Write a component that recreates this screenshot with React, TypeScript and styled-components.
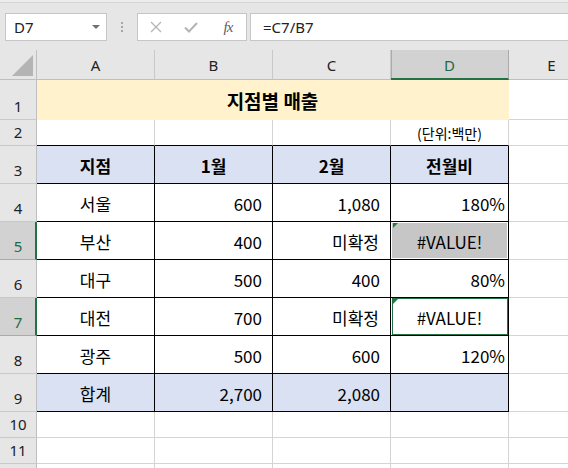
import React from "react";
import styled, { createGlobalStyle, css } from "styled-components";

const Global = createGlobalStyle`
  html, body { margin: 0; padding: 0; background: #fff; }
  body { width: 568px; height: 468px; overflow: hidden; font-family: "Noto Sans CJK KR", "Noto Sans", sans-serif; }
  * { box-sizing: border-box; }
`;

const GREEN = "#217346";
const GRID = "#d4d4d4";

const Page = styled.div`
  width: 568px;
  height: 468px;
  overflow: hidden;
  display: flex;
  flex-direction: column;
  background: #fff;
`;

const Toolbar = styled.div`
  height: 50px;
  flex: none;
  background: #e6e6e6;
  border-top: 2px solid #ececec;
  box-shadow: inset 0 1px 0 #d6d6d6;
  display: flex;
  align-items: flex-start;
  padding: 11px 0 0 5px;
`;

const NameBox = styled.div`
  width: 102px;
  height: 28px;
  background: #fff;
  border: 1px solid #c6c6c6;
  display: flex;
  align-items: center;
  justify-content: space-between;
  padding: 0 6px 0 8px;
  font-family: "Noto Sans", sans-serif;
  font-size: 15px;
  color: #222;
`;

const Caret = styled.span`
  width: 0;
  height: 0;
  border-left: 4px solid transparent;
  border-right: 4px solid transparent;
  border-top: 4px solid #707070;
`;

const Dots = styled.div`
  width: 30px;
  height: 28px;
  display: flex;
  flex-direction: column;
  align-items: center;
  justify-content: center;
  gap: 2px;
  & > span { width: 2px; height: 2px; background: #a6a6a6; }
`;

const FxBox = styled.div`
  width: 110px;
  height: 28px;
  background: #fff;
  border: 1px solid #c6c6c6;
  display: flex;
  align-items: center;
  padding-left: 12px;
`;

const FxBtn = styled.span<{ $w: number }>`
  width: ${(p) => p.$w}px;
  display: flex;
  align-items: center;
  justify-content: center;
`;

const FxLabel = styled.span`
  font-family: "Liberation Serif", serif;
  font-style: italic;
  font-size: 15px;
  color: #5e5e5e;
  letter-spacing: -1px;
`;

const FormulaInput = styled.div`
  flex: 1;
  margin-left: 3px;
  height: 28px;
  background: #fff;
  border: 1px solid #c6c6c6;
  border-right: none;
  display: flex;
  align-items: center;
  padding-left: 12px;
  font-family: "Noto Sans", sans-serif;
  font-size: 15px;
  color: #222;
`;

const Sheet = styled.div`
  display: grid;
  grid-template-columns: 37px repeat(4, 118px) 86px;
  grid-template-rows: 30px 40px 26px repeat(7, 38px) 26px 26px 26px;
  width: 604px;
`;

const Corner = styled.div`
  background: #e6e6e6;
  border-right: 1px solid #bfbfbf;
  border-bottom: 1px solid #bfbfbf;
  position: relative;
  &::after {
    content: "";
    position: absolute;
    right: 3px;
    bottom: 3px;
    width: 0;
    height: 0;
    border-left: 21px solid transparent;
    border-bottom: 21px solid #b4b4b4;
  }
`;

const ColHead = styled.div<{ $sel?: boolean }>`
  background: ${(p) => (p.$sel ? "#d2d2d2" : "#e6e6e6")};
  border-right: 1px solid ${(p) => (p.$sel ? "#ababab" : "#c9c9c9")};
  border-bottom: ${(p) => (p.$sel ? `2px solid ${GREEN}` : "1px solid #bfbfbf")};
  ${(p) => p.$sel && css`box-shadow: inset 1px 0 0 #ababab;`}
  display: flex;
  align-items: center;
  justify-content: center;
  padding-top: ${(p) => (p.$sel ? 1 : 0)}px;
  font-family: "Noto Sans", sans-serif;
  font-size: 15px;
  color: ${(p) => (p.$sel ? "#1d6b43" : "#222")};
`;

const RowHead = styled.div<{ $sel?: boolean }>`
  background: ${(p) => (p.$sel ? "#d2d2d2" : "#e6e6e6")};
  border-right: ${(p) => (p.$sel ? `2px solid ${GREEN}` : "1px solid #bfbfbf")};
  border-bottom: 1px solid ${(p) => (p.$sel ? "#ababab" : "#c9c9c9")};
  display: flex;
  align-items: flex-end;
  justify-content: center;
  padding-bottom: 2px;
  padding-left: ${(p) => (p.$sel ? 1 : 0)}px;
  font-family: "Noto Sans", sans-serif;
  font-size: 15px;
  line-height: 22px;
  color: ${(p) => (p.$sel ? "#1d6b43" : "#222")};
`;

type Align = "left" | "center" | "right";

const Cell = styled.div<{
  $bg?: string;
  $rb?: string;
  $bb?: string;
  $align?: Align;
  $pad?: number;
  $bold?: boolean;
  $size?: number;
  $span?: number;
  $selFill?: boolean;
  $active?: boolean;
  $flag?: boolean;
}>`
  position: relative;
  background: ${(p) => p.$bg || "#fff"};
  border-right: 1px solid ${(p) => p.$rb || GRID};
  border-bottom: 1px solid ${(p) => p.$bb || GRID};
  ${(p) => p.$span && css`grid-column: span ${p.$span};`}
  display: flex;
  align-items: center;
  justify-content: ${(p) =>
    p.$align === "right" ? "flex-end" : p.$align === "left" ? "flex-start" : "center"};
  padding-right: ${(p) => p.$pad ?? 0}px;
  padding-top: 1px;
  font-size: ${(p) => p.$size ?? 17}px;
  font-weight: ${(p) => (p.$bold ? 700 : 400)};
  color: #000;
  white-space: nowrap;
  ${(p) =>
    p.$selFill &&
    css`
      background: #c6c6c6;
      box-shadow: inset 0 0 0 1px #fff;
    `}
  ${(p) =>
    p.$active &&
    css`
      &::before {
        content: "";
        position: absolute;
        left: 1px; top: 0; right: 0; bottom: 0;
        border: 1px solid ${GREEN};
        pointer-events: none;
      }
    `}
  ${(p) =>
    p.$flag &&
    css`
      &::after {
        content: "";
        position: absolute;
        left: 2px;
        top: 1px;
        width: 0;
        height: 0;
        border-top: 5px solid #1f7a3c;
        border-right: 5px solid transparent;
      }
    `}
`;

type CellSpec = {
  text?: string;
  align?: Align;
  pad?: number;
  bold?: boolean;
  selFill?: boolean;
  active?: boolean;
  flag?: boolean;
};

const BLUE = "#d9e1f2";
const YEL = "#fff2cc";

const cols = ["A", "B", "C", "D", "E"];

const tableRows: { n: number; bg?: string; sel?: boolean; cells: CellSpec[] }[] = [
  {
    n: 3,
    bg: BLUE,
    cells: [
      { text: "지점", bold: true },
      { text: "1월", bold: true },
      { text: "2월", bold: true },
      { text: "전월비", bold: true },
    ],
  },
  {
    n: 4,
    cells: [
      { text: "서울" },
      { text: "600", align: "right", pad: 10 },
      { text: "1,080", align: "right", pad: 10 },
      { text: "180%", align: "right", pad: 3 },
    ],
  },
  {
    n: 5,
    sel: true,
    cells: [
      { text: "부산" },
      { text: "400", align: "right", pad: 10 },
      { text: "미확정", align: "right", pad: 11 },
      { text: "#VALUE!", selFill: true, flag: true },
    ],
  },
  {
    n: 6,
    cells: [
      { text: "대구" },
      { text: "500", align: "right", pad: 10 },
      { text: "400", align: "right", pad: 10 },
      { text: "80%", align: "right", pad: 3 },
    ],
  },
  {
    n: 7,
    sel: true,
    cells: [
      { text: "대전" },
      { text: "700", align: "right", pad: 10 },
      { text: "미확정", align: "right", pad: 11 },
      { text: "#VALUE!", active: true, flag: true },
    ],
  },
  {
    n: 8,
    cells: [
      { text: "광주" },
      { text: "500", align: "right", pad: 10 },
      { text: "600", align: "right", pad: 10 },
      { text: "120%", align: "right", pad: 3 },
    ],
  },
  {
    n: 9,
    bg: BLUE,
    cells: [
      { text: "합계" },
      { text: "2,700", align: "right", pad: 10 },
      { text: "2,080", align: "right", pad: 10 },
      { text: "" },
    ],
  },
];

const XIcon = () => (
  <svg width="12" height="12" viewBox="0 0 12 12">
    <path d="M1 1 L11 11 M11 1 L1 11" stroke="#b4b4b4" strokeWidth="1.3" fill="none" />
  </svg>
);

const CheckIcon = () => (
  <svg width="14" height="11" viewBox="0 0 14 11">
    <path d="M1 5.5 L5 9.5 L13 1" stroke="#b4b4b4" strokeWidth="2" fill="none" />
  </svg>
);

export default function App() {
  return (
    <Page>
      <Global />
      <Toolbar>
        <NameBox>
          <span>D7</span>
          <Caret />
        </NameBox>
        <Dots>
          <span />
          <span />
          <span />
        </Dots>
        <FxBox>
          <FxBtn $w={12}>
            <XIcon />
          </FxBtn>
          <FxBtn $w={58}>
            <CheckIcon />
          </FxBtn>
          <FxBtn $w={16}>
            <FxLabel>fx</FxLabel>
          </FxBtn>
        </FxBox>
        <FormulaInput>=C7/B7</FormulaInput>
      </Toolbar>
      <Sheet>
        <Corner />
        {cols.map((c) => (
          <ColHead key={c} $sel={c === "D"}>
            {c}
          </ColHead>
        ))}

        <RowHead>1</RowHead>
        <Cell $span={4} $bg={YEL} $rb={YEL} $bb={YEL} $bold $size={19}>
          지점별 매출
        </Cell>
        <Cell />

        <RowHead>2</RowHead>
        <Cell $bb="#000" />
        <Cell $bb="#000" />
        <Cell $bb="#000" />
        <Cell $bb="#000" $size={14}>
          (단위:백만)
        </Cell>
        <Cell />

        {tableRows.map((r) => (
          <React.Fragment key={r.n}>
            <RowHead $sel={r.sel}>{r.n}</RowHead>
            {r.cells.map((c, i) => (
              <Cell
                key={i}
                $bg={r.bg}
                $rb="#000"
                $bb="#000"
                $align={c.align}
                $pad={c.pad}
                $bold={c.bold}
                $selFill={c.selFill}
                $active={c.active}
                $flag={c.flag}
              >
                {c.text}
              </Cell>
            ))}
            <Cell />
          </React.Fragment>
        ))}

        {[10, 11, 12].map((n) => (
          <React.Fragment key={n}>
            <RowHead>{n < 12 ? n : ""}</RowHead>
            <Cell />
            <Cell />
            <Cell />
            <Cell />
            <Cell />
          </React.Fragment>
        ))}
      </Sheet>
    </Page>
  );
}
